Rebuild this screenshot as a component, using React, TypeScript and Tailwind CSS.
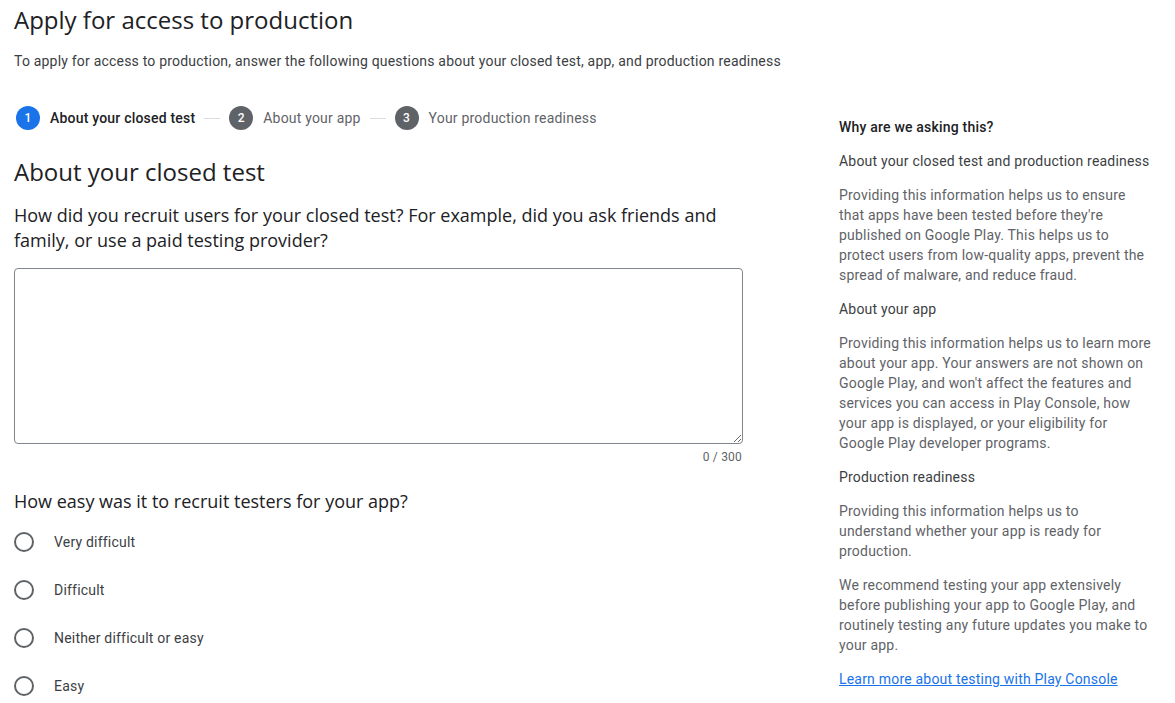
import { useState } from "react";

const steps = [
  { n: 1, label: "About your closed test", active: true },
  { n: 2, label: "About your app", active: false },
  { n: 3, label: "Your production readiness", active: false },
];

const options = ["Very difficult", "Difficult", "Neither difficult or easy", "Easy"];

const heading = "font-['Open_Sans',_'Roboto',_sans-serif] tracking-normal";

const Stepper = () => (
  <div className="flex items-center h-6">
    {steps.map((s, i) => (
      <div key={s.n} className="flex items-center">
        {i > 0 && <div className="w-4 h-px bg-[#dadce0] mx-[9px]" />}
        <div
          className={`w-6 h-6 rounded-full flex items-center justify-center text-white text-xs font-medium ${
            s.active ? "bg-[#1a73e8]" : "bg-[#5f6368]"
          }`}
        >
          {s.n}
        </div>
        <span
          className={`ml-2.5 text-sm ${
            s.active ? "text-[#202124] font-medium" : "text-[#5f6368]"
          }`}
        >
          {s.label}
        </span>
      </div>
    ))}
  </div>
);

const SidePanel = () => (
  <aside className="w-[313px] pt-[46px] text-sm leading-5 text-[#5f6368] flex flex-col gap-[14px]">
    <p className="text-[#202124] font-medium">Why are we asking this?</p>
    <p className="text-[#3c4043]">About your closed test and production readiness</p>
    <p>
      Providing this information helps us to ensure that apps have been tested before
      they're published on Google Play. This helps us to protect users from low-quality
      apps, prevent the spread of malware, and reduce fraud.
    </p>
    <p className="text-[#3c4043]">About your app</p>
    <p>
      Providing this information helps us to learn more about your app. Your answers are
      not shown on Google Play, and won't affect the features and services you can access
      in Play Console, how your app is displayed, or your eligibility for Google Play
      developer programs.
    </p>
    <p className="text-[#3c4043]">Production readiness</p>
    <p>
      Providing this information helps us to understand whether your app is ready for
      production.
    </p>
    <p>
      We recommend testing your app extensively before publishing your app to Google Play,
      and routinely testing any future updates you make to your app.
    </p>
    <a href="#" className="text-[#1a73e8] underline">
      Learn more about testing with Play Console
    </a>
  </aside>
);

const App = () => {
  const [text, setText] = useState("");
  const [choice, setChoice] = useState<string | null>(null);

  return (
    <div className="min-h-screen bg-white font-['Roboto',_sans-serif] tracking-[0.2px] text-[#202124] overflow-hidden px-[14px]">
      <h1 className={`${heading} text-[24px] leading-8 pt-1`}>
        Apply for access to production
      </h1>
      <p className="text-sm text-[#3c4043] mt-[15px] leading-5 whitespace-nowrap">
        To apply for access to production, answer the following questions about your closed
        test, app, and production readiness
      </p>
      <div className="flex">
        <main className="w-[729px]">
          <div className="mt-[35px] ml-0.5">
            <Stepper />
          </div>
          <h2 className={`${heading} text-[24px] leading-8 mt-[26px]`}>
            About your closed test
          </h2>
          <p className={`${heading} text-lg font-medium leading-[25px] mt-[15px]`}>
            How did you recruit users for your closed test? For example, did you ask friends
            and family, or use a paid testing provider?
          </p>
          <textarea
            value={text}
            maxLength={300}
            onChange={(e) => setText(e.target.value)}
            className="block w-full h-[176px] mt-[15px] border border-[#80868b] rounded p-3 text-sm outline-none"
          />
          <div className="text-right text-xs text-[#5f6368] mt-[5px] pr-px leading-4">
            {text.length} / 300
          </div>
          <p className={`${heading} text-lg font-medium leading-6 mt-[24px]`}>
            How easy was it to recruit testers for your app?
          </p>
          <div className="flex flex-col mt-[5px]">
            {options.map((o) => (
              <label key={o} className="flex items-center h-12 cursor-pointer">
                <span className="w-5 h-5 rounded-full border-2 border-[#5f6368] flex items-center justify-center">
                  {choice === o && <span className="w-2.5 h-2.5 rounded-full bg-[#1a73e8]" />}
                </span>
                <input
                  type="radio"
                  name="ease"
                  className="hidden"
                  checked={choice === o}
                  onChange={() => setChoice(o)}
                />
                <span className="ml-5 text-sm text-[#3c4043]">{o}</span>
              </label>
            ))}
          </div>
        </main>
        <div className="ml-[96px]">
          <SidePanel />
        </div>
      </div>
    </div>
  );
};

export default App;
